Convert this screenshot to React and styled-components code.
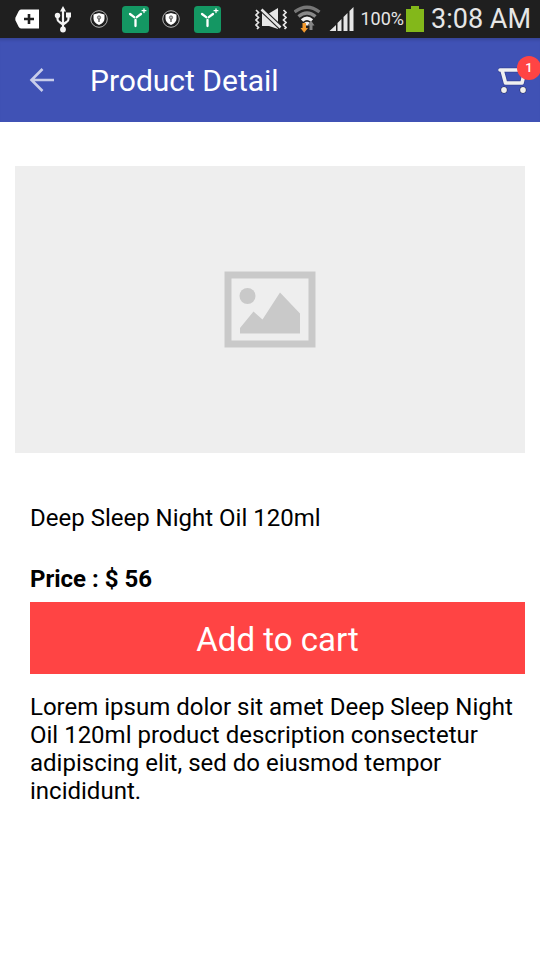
import React from "react";
import styled, { createGlobalStyle } from "styled-components";

const GlobalStyle = createGlobalStyle`
  * { box-sizing: border-box; }
  body {
    margin: 0;
    background: #ffffff;
    color: #000000;
    font-family: Roboto, "Noto Sans", sans-serif;
  }
  h1, h2, p { margin: 0; }
`;

const Page = styled.div`
  min-height: 100vh;
`;

const StatusBar = styled.div`
  display: flex;
  align-items: center;
  justify-content: space-between;
  height: 38px;
  padding: 0 9px;
  background: #1f1f1f;
  color: #e6e6e6;
`;

const Notifications = styled.div`
  display: flex;
  align-items: center;
`;

const Slot = styled.span`
  display: flex;
  justify-content: center;
  width: 36px;
`;

const SystemStatus = styled.div`
  display: flex;
  align-items: center;
  gap: 7px;
  white-space: nowrap;
`;

const Power = styled.span`
  display: flex;
  align-items: center;
  gap: 2px;
  font-size: 18px;
  line-height: 24px;
`;

const Clock = styled.time`
  font-size: 27px;
  line-height: 36px;
`;

const AppBar = styled.header`
  display: flex;
  align-items: center;
  height: 84px;
  padding: 0 12px 0 24px;
  background: #4052b5;
  box-shadow: inset 0 4px 3px -2px #36459a;
  color: #ffffff;
`;

const IconButton = styled.button`
  position: relative;
  display: flex;
  align-items: center;
  justify-content: center;
  width: ${(p) => p.$width}px;
  height: 36px;
  padding: 0;
  border: 0;
  background: none;
  cursor: pointer;
`;

const Title = styled.h1`
  flex: 1;
  padding: 2px 0 0 30px;
  font-size: 30px;
  font-weight: 400;
  line-height: 36px;
`;

const Badge = styled.span`
  position: absolute;
  top: -6px;
  right: -13px;
  width: 24px;
  height: 24px;
  border-radius: 50%;
  background: #ff4444;
  color: #ffffff;
  font: 500 13px/24px Roboto, sans-serif;
  text-align: center;
`;

const Content = styled.main`
  padding: 44px 15px 24px;
`;

const Picture = styled.div`
  display: flex;
  align-items: center;
  justify-content: center;
  height: 287px;
  background: #eeeeee;
`;

const Details = styled.section`
  display: flex;
  flex-direction: column;
  padding: 51px 0 0 15px;
`;

const Name = styled.h2`
  font-size: 24px;
  font-weight: 400;
  line-height: 28px;
`;

const Price = styled.p`
  padding: 33px 0 9px;
  font-size: 24px;
  font-weight: 700;
  line-height: 28px;
`;

const AddButton = styled.button`
  height: 72px;
  padding: 4px 0 0;
  border: 0;
  background: #ff4444;
  color: #ffffff;
  font: 400 33px/40px Roboto, sans-serif;
  cursor: pointer;
`;

const Description = styled.p`
  padding-top: 19px;
  font-size: 24px;
  line-height: 28px;
`;

const TagIcon = () => (
  <svg width="24" height="20" viewBox="0 0 24 20" aria-hidden="true">
    <path d="M6 0.5H24V19.5H6Q4.500 19.500 3.500 17.500L0.500 11.500Q0 10 0.500 8.500L3.500 2.500Q4.500 0.500 6 0.500Z" fill="#fff" />
    <path d="M14 5V15M9 10H19" stroke="#1f1f1f" strokeWidth="2.600" />
  </svg>
);

const UsbIcon = () => (
  <svg width="18" height="28" viewBox="0 0 18 28" aria-hidden="true">
    <g fill="none" stroke="#f4f4f4" strokeWidth="2.200">
      <path d="M9 5V23M3.500 10V14Q3.500 16 5.500 17L9 19.500M14.500 9V14Q14.500 16 12.500 17L9 19.500" />
    </g>
    <g fill="#f4f4f4">
      <path d="M9 1L12 6.500H6ZM12 7.500H17V12.500H12Z" />
      <circle cx="3.500" cy="10.500" r="2.700" />
      <circle cx="9" cy="24.500" r="2.900" />
    </g>
  </svg>
);

const ShieldIcon = () => (
  <svg width="18" height="18" viewBox="0 0 18 18" aria-hidden="true">
    <circle cx="9" cy="9" r="8.300" fill="none" stroke="#b5b5b5" strokeWidth="1" />
    <path d="M9 3L14.500 4.500V8.500Q14.500 12.500 9 15Q3.500 12.500 3.500 8.500V4.500Z" fill="#fff" />
    <circle cx="9" cy="7.500" r="1.600" fill="#bbb" stroke="#555" strokeWidth="0.900" />
    <path d="M9 9V12" stroke="#444" strokeWidth="1.200" />
  </svg>
);

const BranchIcon = () => (
  <svg width="27" height="27" viewBox="0 0 27 27" aria-hidden="true">
    <rect width="27" height="27" rx="3.500" fill="#149763" />
    <g fill="none" stroke="#fff" strokeLinecap="round">
      <path d="M8 8L12.200 11.200M19 8L14.800 11.200M13.500 14V20" strokeWidth="2.300" />
      <path d="M22 2.800V6.600M20.100 4.700H23.900" strokeWidth="1.300" />
    </g>
  </svg>
);

const VibrateOffIcon = () => (
  <svg width="32" height="22" viewBox="0 0 32 22" aria-hidden="true">
    <path
      d="M1 2L3.500 4.500L1 7L3.500 9.500L1 12L3.500 14.500L1 17L3.500 19.500L2 21M28.500 2L31 4.500L28.500 7L31 9.500L28.500 12L31 14.500L28.500 17L31 19.500L29.500 21"
      fill="none"
      stroke="#e6e6e6"
      strokeWidth="1.700"
    />
    <path d="M7 5V18H14L23 21V0L13 6Z" fill="#e6e6e6" />
    <path d="M5 0L27 21" stroke="#1f1f1f" strokeWidth="4.800" />
    <path d="M6.500 1.500L25.500 19.500" stroke="#e6e6e6" strokeWidth="2.600" />
  </svg>
);

const WifiIcon = () => (
  <svg width="28" height="28" viewBox="1 0 28 28" aria-hidden="true">
    <g fill="none" strokeWidth="3.400">
      <path d="M1.500 7Q14 -2.500 26.500 7" stroke="#777" />
      <path d="M5.500 11.500Q14 4.500 22.500 11.500" stroke="#888" />
      <path d="M9 15.500Q14 11 19 15.500" stroke="#eee" />
    </g>
    <path d="M11 18Q14 15.500 17 18L14 21Z" fill="#eee" />
    <path d="M9.500 18H13V23H15L11.200 27.800L7.500 23H9.500Z" fill="#f29a2e" />
    <path d="M16.500 25V20.500H14.500L18 15.500L21.500 20.500H19.500V25Z" fill="#858585" />
  </svg>
);

const SignalIcon = () => (
  <svg width="25" height="24" viewBox="0 0 25 24" aria-hidden="true">
    <path d="M0.500 24L7 18V24ZM8.500 24V16L12.500 12V24ZM14.500 24V10L18.500 6V24ZM20.500 24V4L24.500 0V24Z" fill="#e6e6e6" />
  </svg>
);

const BatteryIcon = () => (
  <svg width="18" height="26" viewBox="0 0 18 26" aria-hidden="true">
    <path d="M5 0H13V3H18V26H0V3H5Z" fill="#83b81a" />
  </svg>
);

const BackIcon = () => (
  <svg width="26" height="26" viewBox="0 0 26 26" aria-hidden="true">
    <path d="M13.500 2L2.500 13L13.500 24M2.500 13H25" fill="none" stroke="#c8cdea" strokeWidth="2.600" />
  </svg>
);

const CartIcon = () => (
  <svg width="30" height="28" viewBox="0 0 30 28" aria-hidden="true">
    <g stroke="#2e3b85" strokeOpacity="0.6">
      <path d="M2 4H27L24 17H7.500L4 4" fill="none" strokeWidth="5.200" strokeLinejoin="round" strokeLinecap="round" />
      <circle cx="6" cy="24" r="3.200" />
      <circle cx="25" cy="24" r="3.200" />
    </g>
    <g fill="#f0f0f0">
      <path d="M2 4H27L24 17H7.500L4 4" fill="none" stroke="#f0f0f0" strokeWidth="3.600" strokeLinejoin="round" strokeLinecap="round" />
      <circle cx="6" cy="24" r="2.900" />
      <circle cx="25" cy="24" r="2.900" />
    </g>
  </svg>
);

const PlaceholderIcon = () => (
  <svg width="92" height="78" viewBox="0 0 92 78" role="img" aria-label="No product image">
    <rect x="4" y="4" width="84" height="69" fill="none" stroke="#c9c9c9" strokeWidth="7" />
    <circle cx="23.500" cy="25" r="8" fill="#c9c9c9" />
    <path d="M16 62.500V57L29.500 40.500L38.500 48.500L56 21.500L76 42.500V62.500Z" fill="#c9c9c9" />
  </svg>
);

const notifications = [TagIcon, UsbIcon, ShieldIcon, BranchIcon, ShieldIcon, BranchIcon];

export default function App() {
  return (
    <Page>
      <GlobalStyle />
      <StatusBar>
        <Notifications>
          {notifications.map((Icon, i) => (
            <Slot key={i}>
              <Icon />
            </Slot>
          ))}
        </Notifications>
        <SystemStatus>
          <VibrateOffIcon />
          <WifiIcon />
          <SignalIcon />
          <Power>
            100%
            <BatteryIcon />
          </Power>
          <Clock>3:08 AM</Clock>
        </SystemStatus>
      </StatusBar>
      <AppBar>
        <IconButton $width={36} aria-label="Back">
          <BackIcon />
        </IconButton>
        <Title>Product Detail</Title>
        <IconButton $width={30} aria-label="Cart, 1 item">
          <CartIcon />
          <Badge>1</Badge>
        </IconButton>
      </AppBar>
      <Content>
        <Picture>
          <PlaceholderIcon />
        </Picture>
        <Details>
          <Name>Deep Sleep Night Oil 120ml</Name>
          <Price>Price : $ 56</Price>
          <AddButton>Add to cart</AddButton>
          <Description>
            Lorem ipsum dolor sit amet Deep Sleep Night Oil 120ml product description consectetur
            adipiscing elit, sed do eiusmod tempor incididunt.
          </Description>
        </Details>
      </Content>
    </Page>
  );
}
